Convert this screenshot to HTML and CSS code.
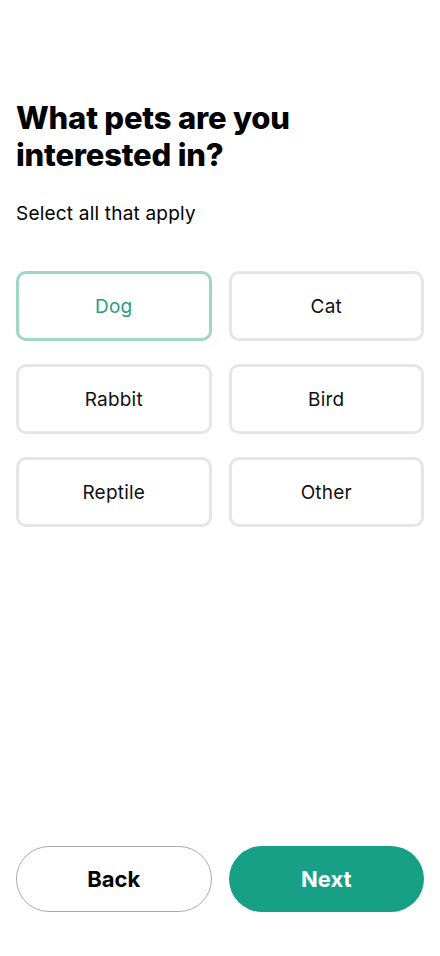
FILE: index.html
```html
<!DOCTYPE html>
<html lang="en">
<head>
  <meta charset="UTF-8">
  <meta name="viewport" content="width=device-width, initial-scale=1.0">
  <title>Pet interests</title>
  <link rel="stylesheet" href="styles.css">
</head>
<body>

<div class="screen">
  <div class="content">
    <h1>What pets are you interested in?</h1>
    <p class="hint">Select all that apply</p>

    <div class="options">
      <button class="option selected">Dog</button>
      <button class="option">Cat</button>
      <button class="option">Rabbit</button>
      <button class="option">Bird</button>
      <button class="option">Reptile</button>
      <button class="option">Other</button>
    </div>
  </div>

  <div class="actions">
    <button class="btn back">Back</button>
    <button class="btn next">Next</button>
  </div>
</div>

</body>
</html>
```

FILE: styles.css
```css
body {
  font-family: Inter, "Noto Sans", sans-serif;
  background-color: #fff;
  color: #000;
  margin: 0;
  padding: 0;
}
.screen {
  height: 956px;
  box-sizing: border-box;
  padding: 0 16px 44px;
  display: flex;
  flex-direction: column;
}
.content {
  flex: 1;
}
h1 {
  font-size: 31px;
  font-weight: 800;
  line-height: 37px;
  letter-spacing: -0.2px;
  margin: 99px 0 0;
  max-width: 290px;
}
.hint {
  font-size: 19px;
  letter-spacing: 0.2px;
  margin: 29px 0 0;
}
.options {
  display: grid;
  grid-template-columns: 1fr 1fr;
  column-gap: 17px;
  row-gap: 23px;
  margin-top: 46px;
}
.option {
  height: 70px;
  background-color: #fff;
  border: 3px solid #e6e6e6;
  border-radius: 10px;
  font-family: inherit;
  font-size: 19px;
  letter-spacing: 0.2px;
  color: #111;
  cursor: pointer;
}
.option.selected {
  border-color: #9fd6c5;
  color: #2a9c80;
}
.actions {
  display: grid;
  grid-template-columns: 1fr 1fr;
  column-gap: 17px;
}
.btn {
  height: 66px;
  border-radius: 33px;
  font-family: inherit;
  font-size: 22px;
  font-weight: 700;
  cursor: pointer;
}
.back {
  background-color: #fff;
  border: 1px solid #aaa;
  color: #000;
}
.next {
  background-color: #17a085;
  border: none;
  color: #fff;
}
```
